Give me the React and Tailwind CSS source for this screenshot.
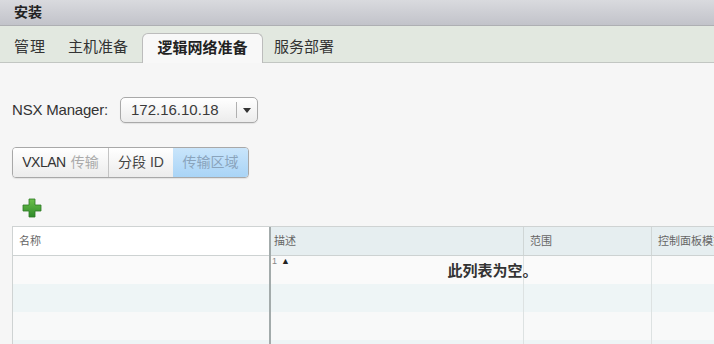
import React from 'react';

const cjk = { fontFamily: '"Liberation Sans", "Noto Sans CJK SC", sans-serif' };

const PlusIcon = () => (
  <svg width="20" height="20" viewBox="0 0 20 20">
    <defs>
      <linearGradient id="pg" x1="0" y1="0" x2="0" y2="1">
        <stop offset="0" stopColor="#6cc04a" />
        <stop offset="1" stopColor="#2f8a2a" />
      </linearGradient>
    </defs>
    <path d="M7 1h6v6h6v6h-6v6H7v-6H1V7h6z" fill="url(#pg)" stroke="#2d7a26" strokeWidth="0.8" strokeLinejoin="round" />
  </svg>
);

const App = () => {
  const rows = ['bg-[#fafafa]', 'bg-[#eef5f6]', 'bg-[#f8f9f9]', 'bg-[#eef5f6]'];

  return (
    <div className="w-[714px] h-[344px] overflow-hidden bg-[#f6f6f6] flex flex-col" style={cjk}>
      {/* title */}
      <div className="h-[26px] shrink-0 bg-gradient-to-b from-[#d9dade] to-[#c2c3ca] border-b border-[#aeafb3] flex items-center px-[14px]">
        <span className="text-[14px] font-bold text-[#222]">安装</span>
      </div>

      {/* tabs */}
      <div className="h-[37px] shrink-0 bg-[#e2e8e0] border-b border-[#c2c6c2] flex items-end pl-[14px] text-[15px] text-[#333]">
        <div className="h-[29px] flex items-center tracking-[1px]">管理</div>
        <div className="h-[29px] flex items-center ml-[22px]">主机准备</div>
        <div className="h-[30px] ml-[14px] w-[121px] -mb-px bg-[#f8f8f8] border border-b-0 border-[#bcbcbc] rounded-t-[6px] flex items-center justify-center font-bold text-[#222]">
          逻辑网络准备
        </div>
        <div className="h-[29px] flex items-center ml-[11px]">服务部署</div>
      </div>

      {/* content */}
      <div className="flex-1 flex flex-col pl-[12px]">
        <div className="flex items-center mt-[34px] h-[26px]">
          <span className="text-[15px] text-[#333] tracking-[-0.2px]">NSX Manager:</span>
          <div className="ml-[12px] w-[138px] h-[26px] rounded-[5px] border border-[#a9a9a9] bg-gradient-to-b from-white to-[#ececec] flex items-center shadow-[0_1px_1px_rgba(0,0,0,0.08)]">
            <span className="flex-1 pl-[10px] text-[15px] text-[#3a3a3a]">172.16.10.18</span>
            <div className="w-px h-[16px] bg-[#b0b0b0]" />
            <div className="w-[20px] flex justify-center">
              <svg width="8" height="5" viewBox="0 0 8 5"><path d="M0 0h8L4 5z" fill="#333" /></svg>
            </div>
          </div>
        </div>

        <div className="mt-[24px] flex w-[237px] h-[31px] rounded-[4px] border border-[#a8a8a8] overflow-hidden text-[14px] shadow-[0_1px_1px_rgba(0,0,0,0.08)]">
          <div className="w-[96px] flex items-center justify-center bg-gradient-to-b from-white to-[#ececec] border-r border-[#c4c4c4]">
            <span className="text-[#333] tracking-[-0.5px]">VXLAN</span>
            <span className="ml-[5px] text-[#aaa]">传输</span>
          </div>
          <div className="w-[64px] flex items-center justify-center bg-gradient-to-b from-white to-[#ececec] text-[#444]">
            分段 ID
          </div>
          <div className="flex-1 flex items-center justify-center bg-gradient-to-b from-[#c9e5fb] to-[#a9d4f6] text-[#8aa4bc]">
            传输区域
          </div>
        </div>

        <div className="mt-[20px] ml-[10px] h-[20px]">
          <PlusIcon />
        </div>

        {/* table */}
        <div className="mt-[8px] flex-1 flex border-t border-l border-[#cfd3d3] relative">
          <div className="w-[256px] shrink-0 flex flex-col bg-white">
            <div className="h-[29px] border-b border-[#cdd2d2] flex items-center pl-[6px] text-[11px] text-[#666]">名称</div>
            {rows.map((c, i) => (
              <div key={i} className={`h-[28px] ${c}`} />
            ))}
          </div>
          <div className="w-[2px] shrink-0 bg-[#a3abab]" />
          <div className="flex-1 min-w-0 flex flex-col overflow-hidden">
            <div className="h-[29px] border-b border-[#cdd2d2] bg-[#e6eef0] flex text-[11px] text-[#666]">
              <div className="w-[253px] shrink-0 border-r border-[#d0d6d6] flex items-center pl-[3px]">描述</div>
              <div className="w-[128px] shrink-0 border-r border-[#d0d6d6] flex items-center pl-[6px]">范围</div>
              <div className="flex-1 flex items-center pl-[6px] whitespace-nowrap">控制面板模式</div>
            </div>
            {rows.map((c, i) => (
              <div key={i} className={`h-[28px] flex ${c}`}>
                <div className="w-[253px] shrink-0 border-r border-[#dde2e2]" />
                <div className="w-[128px] shrink-0 border-r border-[#dde2e2]" />
                <div className="flex-1" />
              </div>
            ))}
          </div>
          <div className="absolute left-[259px] top-[29px] text-[9px] leading-[10px] text-[#222] flex gap-[4px]">
            <span className="text-[#888]">1</span>
            <span>▲</span>
          </div>
          <div className="absolute left-[258px] right-0 top-[33px] text-center text-[15px] font-bold text-[#333]">
            此列表为空。
          </div>
        </div>
      </div>
    </div>
  );
};

export default App;
